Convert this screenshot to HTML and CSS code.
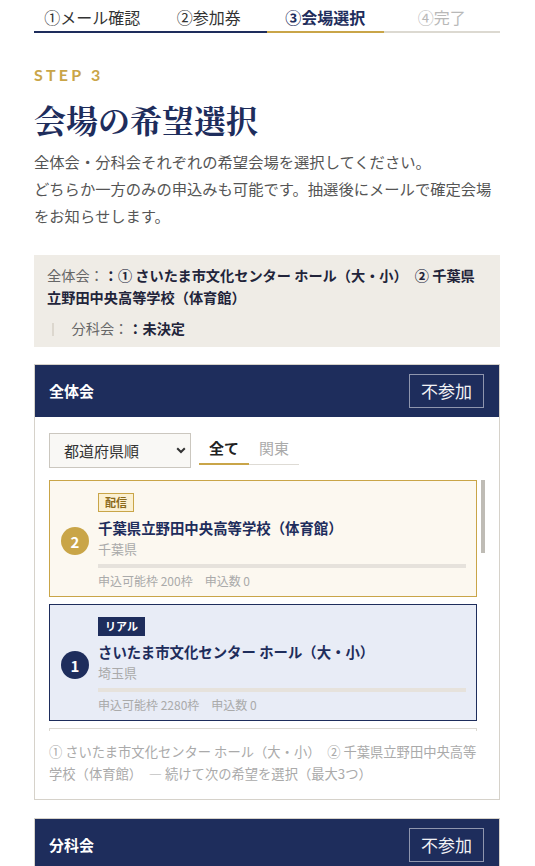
FILE: index.html
```html
<!DOCTYPE html>
<html lang="ja">
<head>
<meta charset="utf-8">
<title>会場の希望選択</title>
<link rel="stylesheet" href="styles.css">
</head>
<body>
<div class="page">
  <nav class="steps">
    <div class="step step--done">①メール確認</div>
    <div class="step step--done">②参加券</div>
    <div class="step step--current">③会場選択</div>
    <div class="step step--todo">④完了</div>
  </nav>

  <p class="eyebrow">STEP 3</p>
  <h1 class="title">会場の希望選択</h1>
  <p class="lead">全体会・分科会それぞれの希望会場を選択してください。<br>どちらか一方のみの申込みも可能です。抽選後にメールで確定会場をお知らせします。</p>

  <div class="summary">
    <div class="summary-item"><span class="summary-label">全体会：</span><strong class="summary-value">：① さいたま市文化センター ホール（大・小）　② 千葉県立野田中央高等学校（体育館）</strong></div>
    <div class="summary-item"><span class="summary-sep"></span><span class="summary-label">分科会：</span><strong class="summary-value">：未決定</strong></div>
  </div>

  <section class="panel">
    <header class="panel-head">
      <h2 class="panel-title">全体会</h2>
      <button class="skip-btn" type="button">不参加</button>
    </header>
    <div class="panel-body">
      <div class="controls">
        <div class="select-wrap">
          <select class="sort-select">
            <option>都道府県順</option>
            <option>申込可能枠順</option>
          </select>
          <svg class="select-chevron" width="10" height="7" viewBox="0 0 10 7"><path d="M1.2 1.2 L5 5 L8.8 1.2" fill="none" stroke="#333" stroke-width="2"/></svg>
        </div>
        <div class="filter-tabs">
          <span class="ftab ftab--active">全て</span>
          <span class="ftab">関東</span>
        </div>
      </div>

      <div class="list-frame">
        <div class="venue-list">
          <div class="venue venue--second">
            <span class="rank rank--gold">2</span>
            <div class="venue-body">
              <span class="badge badge--stream">配信</span>
              <div class="venue-name">千葉県立野田中央高等学校（体育館）</div>
              <div class="venue-pref">千葉県</div>
              <div class="venue-bar"></div>
              <div class="venue-stats">申込可能枠 200枠　申込数 0</div>
            </div>
          </div>
          <div class="venue venue--first">
            <span class="rank rank--navy">1</span>
            <div class="venue-body">
              <span class="badge badge--real">リアル</span>
              <div class="venue-name">さいたま市文化センター ホール（大・小）</div>
              <div class="venue-pref">埼玉県</div>
              <div class="venue-bar"></div>
              <div class="venue-stats">申込可能枠 2280枠　申込数 0</div>
            </div>
          </div>
          <div class="venue">
            <span class="rank rank--empty"></span>
            <div class="venue-body">
              <span class="badge badge--real">リアル</span>
              <div class="venue-name">東京国際フォーラム ホールA</div>
              <div class="venue-pref">東京都</div>
              <div class="venue-bar"></div>
              <div class="venue-stats">申込可能枠 5000枠　申込数 0</div>
            </div>
          </div>
          <div class="venue">
            <span class="rank rank--empty"></span>
            <div class="venue-body">
              <span class="badge badge--real">リアル</span>
              <div class="venue-name">横浜市公会堂</div>
              <div class="venue-pref">神奈川県</div>
              <div class="venue-bar"></div>
              <div class="venue-stats">申込可能枠 900枠　申込数 0</div>
            </div>
          </div>
        </div>
        <div class="scroll-track"><div class="scroll-thumb"></div></div>
      </div>

      <p class="pick-note">① さいたま市文化センター ホール（大・小）　② 千葉県立野田中央高等学校（体育館）　— 続けて次の希望を選択（最大3つ）</p>
    </div>
  </section>

  <section class="panel panel--second">
    <header class="panel-head">
      <h2 class="panel-title">分科会</h2>
      <button class="skip-btn" type="button">不参加</button>
    </header>
    <div class="panel-body">
      <div class="controls">
        <div class="select-wrap">
          <select class="sort-select">
            <option>都道府県順</option>
          </select>
          <svg class="select-chevron" width="10" height="7" viewBox="0 0 10 7"><path d="M1.2 1.2 L5 5 L8.8 1.2" fill="none" stroke="#333" stroke-width="2"/></svg>
        </div>
      </div>
    </div>
  </section>
</div>
</body>
</html>
```

FILE: styles.css
```css
* {
  box-sizing: border-box;
  margin: 0;
  padding: 0;
}

body {
  font-family: "Noto Sans CJK JP", "Noto Sans", sans-serif;
  color: #333;
  background: #fff;
}

.page {
  width: 466px;
  margin-left: 34px;
  padding-bottom: 40px;
}

/* progress steps */
.steps {
  display: flex;
  padding-top: 5px;
}

.step {
  flex: 1;
  text-align: center;
  font-size: 16px;
  line-height: 24px;
  padding-bottom: 2px;
  border-bottom: 2px solid #1e2d5c;
  color: #333;
}

.step--current {
  border-bottom-color: #c9a548;
  color: #1e2d5c;
  font-weight: 700;
}

.step--todo {
  border-bottom-color: #dcd9d1;
  color: #b8b8b8;
}

/* heading */
.eyebrow {
  margin-top: 30px;
  font-family: Lato, "Noto Sans", sans-serif;
  font-weight: 700;
  font-size: 16px;
  line-height: 24px;
  letter-spacing: 0.2em;
  color: #c9a548;
}

.title {
  margin-top: 10px;
  font-family: "Noto Serif CJK JP", "Noto Sans CJK JP", serif;
  font-size: 32px;
  line-height: 44px;
  font-weight: 700;
  color: #1e2d5c;
}

.lead {
  margin-top: 7px;
  font-size: 15.3px;
  line-height: 27px;
  color: #555;
}

/* summary */
.summary {
  margin-top: 26px;
  background: #efece6;
  padding: 10px 13px 7px 13px;
  display: flex;
  flex-wrap: wrap;
  row-gap: 10px;
  font-size: 14.2px;
  line-height: 21.5px;
}

.summary-label {
  color: #666;
}

.summary-value {
  color: #22243a;
  font-weight: 700;
}

.summary-sep {
  display: inline-block;
  width: 1.5px;
  height: 13px;
  background: #dcd7ce;
  vertical-align: -2px;
  margin: 0 18px 0 5px;
}

/* panels */
.panel {
  margin-top: 17px;
  border: 1px solid #d6d2ca;
}

.panel--second {
  margin-top: 18px;
}

.panel-head {
  background: #1e2d5c;
  height: 52px;
  display: flex;
  align-items: center;
  justify-content: space-between;
  padding: 0 15px 0 14px;
}

.panel-title {
  font-size: 15px;
  font-weight: 700;
  color: #fff;
}

.skip-btn {
  font-family: inherit;
  font-size: 17px;
  line-height: 32px;
  height: 34px;
  padding: 0 11px;
  color: #f2f2f5;
  background: transparent;
  border: 1px solid rgba(255, 255, 255, 0.5);
}

.panel-body {
  padding: 16px 14px 14px 14px;
}

.controls {
  display: flex;
  align-items: flex-start;
}

.select-wrap {
  position: relative;
  width: 142px;
  height: 35px;
}

.sort-select {
  appearance: none;
  -webkit-appearance: none;
  width: 100%;
  height: 100%;
  border: 1px solid #cbc7bf;
  border-radius: 0;
  background: #f9f8f5;
  font-family: inherit;
  font-size: 15px;
  color: #333;
  padding: 0 0 0 14px;
}

.select-chevron {
  position: absolute;
  right: 5px;
  top: 14px;
}

.filter-tabs {
  display: flex;
  margin-left: 8px;
  border-bottom: 1px solid #dedbd5;
}

.ftab {
  padding: 0 10px;
  font-size: 15px;
  line-height: 30px;
  color: #aaa;
  border-bottom: 2px solid transparent;
  margin-bottom: -1px;
}

.ftab--active {
  color: #222;
  font-weight: 700;
  border-bottom-color: #c9a548;
}

/* venue list */
.list-frame {
  margin-top: 12px;
  display: flex;
  gap: 4px;
}

.venue-list {
  flex: 1;
  min-width: 0;
  height: 251px;
  overflow: hidden;
}

.scroll-track {
  flex: none;
  width: 4px;
}

.scroll-thumb {
  height: 73px;
  background: #bfbcb5;
}

.venue {
  display: flex;
  align-items: center;
  gap: 9px;
  border: 1px solid #dcd9d2;
  background: #fff;
  padding: 12px 10px 6px 11px;
  margin-bottom: 7px;
}

.venue--second {
  border-color: #c9a548;
  background: #fcf8f0;
}

.venue--first {
  border-color: #1e2d5c;
  background: #e8ecf6;
}

.rank {
  flex: none;
  width: 28px;
  height: 28px;
  border-radius: 50%;
  display: flex;
  align-items: center;
  justify-content: center;
  color: #fff;
  font-weight: 700;
  font-size: 15px;
}

.rank--gold {
  background: #c9a548;
}

.rank--navy {
  background: #1e2d5c;
}

.rank--empty {
  border: 1.5px solid #d0ccc4;
}

.venue-body {
  flex: 1;
  min-width: 0;
  display: flex;
  flex-direction: column;
  align-items: flex-start;
}

.badge {
  display: block;
  font-size: 11px;
  font-weight: 700;
  line-height: 17px;
  height: 19px;
  padding: 0 6px;
  border: 1px solid transparent;
  margin-bottom: 5px;
}

.badge--stream {
  color: #8b6a1a;
  background: #fbf0d2;
  border-color: #c9a548;
}

.badge--real {
  color: #fff;
  background: #1e2d5c;
  border-color: #1e2d5c;
}

.venue-name {
  font-size: 14.4px;
  line-height: 22px;
  font-weight: 700;
  color: #1e2d5c;
  white-space: nowrap;
}

.venue-pref {
  font-size: 13px;
  line-height: 20px;
  color: #aaa;
}

.venue-bar {
  align-self: stretch;
  height: 4px;
  margin-top: 5px;
  background: #e6e2dc;
}

.venue-stats {
  margin-top: 4px;
  font-size: 12px;
  line-height: 18px;
  color: #aaa;
}

.pick-note {
  margin-top: 10px;
  width: 436px;
  font-size: 13.3px;
  line-height: 22px;
  color: #aaa;
}
```
